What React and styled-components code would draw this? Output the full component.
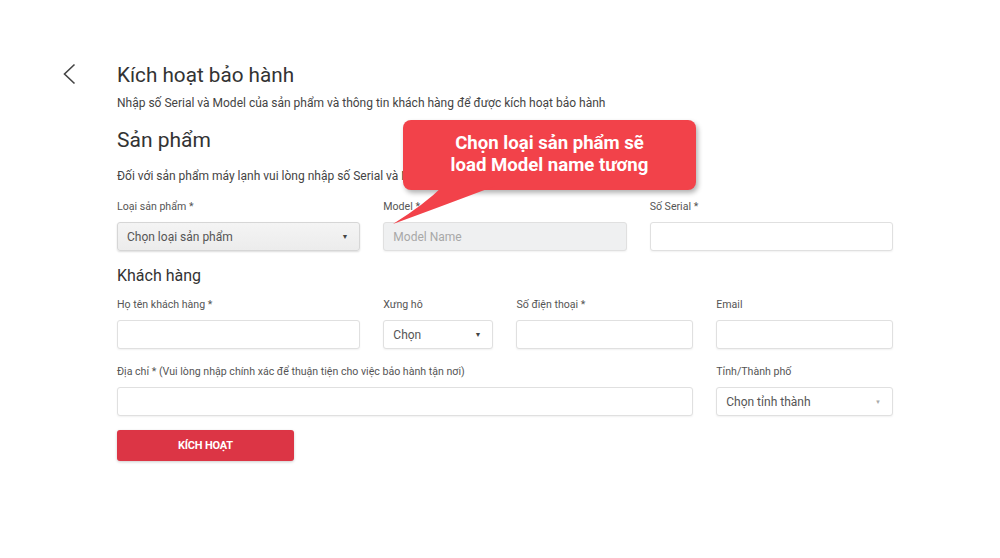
import React from "react";
import styled, { createGlobalStyle } from "styled-components";

const GlobalStyle = createGlobalStyle`
  body {
    margin: 0;
    background: #fff;
    font-family: Roboto, "Liberation Sans", Arial, sans-serif;
    color: #333;
  }
`;

const Page = styled.div`
  position: relative;
  display: flex;
  padding: 63px 107px 40px 62px;
  min-height: 558px;
  box-sizing: border-box;
`;

const BackButton = styled.button`
  width: 55px;
  height: 26px;
  padding: 0;
  border: 0;
  background: none;
  display: flex;
  align-items: flex-start;
  cursor: pointer;
  flex-shrink: 0;
`;

const Content = styled.div`
  flex: 1;
`;

const Title = styled.h1`
  margin: 0;
  font-size: 20.7px;
  line-height: 24px;
  font-weight: 400;
  color: #333;
`;

const Subtitle = styled.p`
  margin: 8px 0 0;
  font-size: 12px;
  line-height: 16px;
  color: #444;
`;

const SectionTitle = styled.h2`
  margin: ${(p) => p.$top || 16}px 0 0;
  font-size: ${(p) => (p.$small ? 16 : 21)}px;
  line-height: ${(p) => (p.$small ? 20 : 26)}px;
  font-weight: 400;
  color: #333;
`;

const Note = styled.p`
  margin: 15px 0 0;
  font-size: 12px;
  line-height: 16px;
  color: #444;
  white-space: nowrap;
`;

const Grid = styled.div`
  display: grid;
  grid-template-columns: repeat(12, 1fr);
  column-gap: 23px;
  margin-top: ${(p) => p.$top || 15}px;
`;

const Field = styled.div`
  grid-column: span ${(p) => p.$span};
  display: flex;
  flex-direction: column;
  gap: 7px;
`;

const Label = styled.label`
  font-size: 10.6px;
  line-height: 16px;
  color: #555;
  white-space: nowrap;
`;

const Input = styled.input`
  box-sizing: border-box;
  height: 29px;
  width: 100%;
  border: 1px solid #e0e0e0;
  border-radius: 3px;
  padding: 0 9px;
  font-family: inherit;
  font-size: 12px;
  color: #555;
  background: ${(p) => (p.disabled ? "#eff0f1" : "#fff")};
  box-shadow: 0 1px 2px rgba(0, 0, 0, 0.06);
  outline: none;

  &::placeholder {
    color: #a8a8a8;
  }
`;

const Select = styled.div`
  box-sizing: border-box;
  height: 29px;
  display: flex;
  align-items: center;
  justify-content: space-between;
  padding: 0 9px;
  border: 1px solid ${(p) => (p.$filled ? "#d6d6d6" : "#e0e0e0")};
  border-radius: 3px;
  background: ${(p) =>
    p.$filled ? "linear-gradient(#f4f4f4, #ececec)" : "#fff"};
  box-shadow: 0 1px 2px rgba(0, 0, 0, ${(p) => (p.$filled ? 0.14 : 0.06)});
  font-size: 12px;
  color: #555;
`;

const Arrow = styled.span`
  font-size: ${(p) => (p.$light ? 6 : 7)}px;
  color: ${(p) => (p.$light ? "#aaa" : "#444")};
  margin-right: 2px;
`;

const SubmitButton = styled.button`
  margin-top: 14px;
  width: 177px;
  height: 31px;
  border: 0;
  border-radius: 3px;
  background: #dc3545;
  color: #fff;
  font-family: inherit;
  font-size: 11px;
  font-weight: 700;
  letter-spacing: -0.2px;
  box-shadow: 0 1px 3px rgba(0, 0, 0, 0.2);
`;

const Callout = styled.div`
  position: absolute;
  left: 403px;
  top: 120px;
  width: 293px;
  height: 70px;
  box-sizing: border-box;
  padding-top: 12px;
  background: #f2424a;
  border-radius: 8px;
  box-shadow: 2px 3px 5px rgba(0, 0, 0, 0.3);
  color: #fff;
  font-size: 18.6px;
  line-height: 22px;
  font-weight: 700;
  text-align: center;
`;

const Tail = styled.svg`
  position: absolute;
  left: -18px;
  top: 66px;
  overflow: visible;
`;

export default function App() {
  return (
    <>
      <GlobalStyle />
      <Page>
        <BackButton aria-label="Quay lại">
          <svg width="14" height="22" viewBox="0 0 14 22">
            <path d="M12.5 1.5 L2.5 11 L12.5 20.5" fill="none" stroke="#444" strokeWidth="1.6" />
          </svg>
        </BackButton>
        <Content>
          <Title>Kích hoạt bảo hành</Title>
          <Subtitle>
            Nhập số Serial và Model của sản phẩm và thông tin khách hàng để được kích hoạt bảo hành
          </Subtitle>

          <SectionTitle>Sản phẩm</SectionTitle>
          <Note>Đối với sản phẩm máy lạnh vui lòng nhập số Serial và Model của dàn lạnh</Note>

          <Grid>
            <Field $span={4}>
              <Label>Loại sản phẩm *</Label>
              <Select $filled>
                Chọn loại sản phẩm <Arrow>▼</Arrow>
              </Select>
            </Field>
            <Field $span={4}>
              <Label>Model *</Label>
              <Input disabled placeholder="Model Name" />
            </Field>
            <Field $span={4}>
              <Label>Số Serial *</Label>
              <Input />
            </Field>
          </Grid>

          <SectionTitle $small $top={15}>Khách hàng</SectionTitle>

          <Grid $top={11}>
            <Field $span={4}>
              <Label>Họ tên khách hàng *</Label>
              <Input />
            </Field>
            <Field $span={2}>
              <Label>Xưng hô</Label>
              <Select>
                Chọn <Arrow>▼</Arrow>
              </Select>
            </Field>
            <Field $span={3}>
              <Label>Số điện thoại *</Label>
              <Input />
            </Field>
            <Field $span={3}>
              <Label>Email</Label>
              <Input />
            </Field>
          </Grid>

          <Grid>
            <Field $span={9}>
              <Label>Địa chỉ * (Vui lòng nhập chính xác để thuận tiện cho việc bảo hành tận nơi)</Label>
              <Input />
            </Field>
            <Field $span={3}>
              <Label>Tỉnh/Thành phố</Label>
              <Select>
                Chọn tỉnh thành <Arrow $light>▼</Arrow>
              </Select>
            </Field>
          </Grid>

          <SubmitButton>KÍCH HOẠT</SubmitButton>
        </Content>

        <Callout>
          Chọn loại sản phẩm sẽ
          <br />
          load Model name tương
          <Tail width="115" height="42" viewBox="0 0 115 42">
            <path d="M58 0 Q40 18 8 38 Q52 22 110 0 Z" fill="#f2424a" />
          </Tail>
        </Callout>
      </Page>
    </>
  );
}
